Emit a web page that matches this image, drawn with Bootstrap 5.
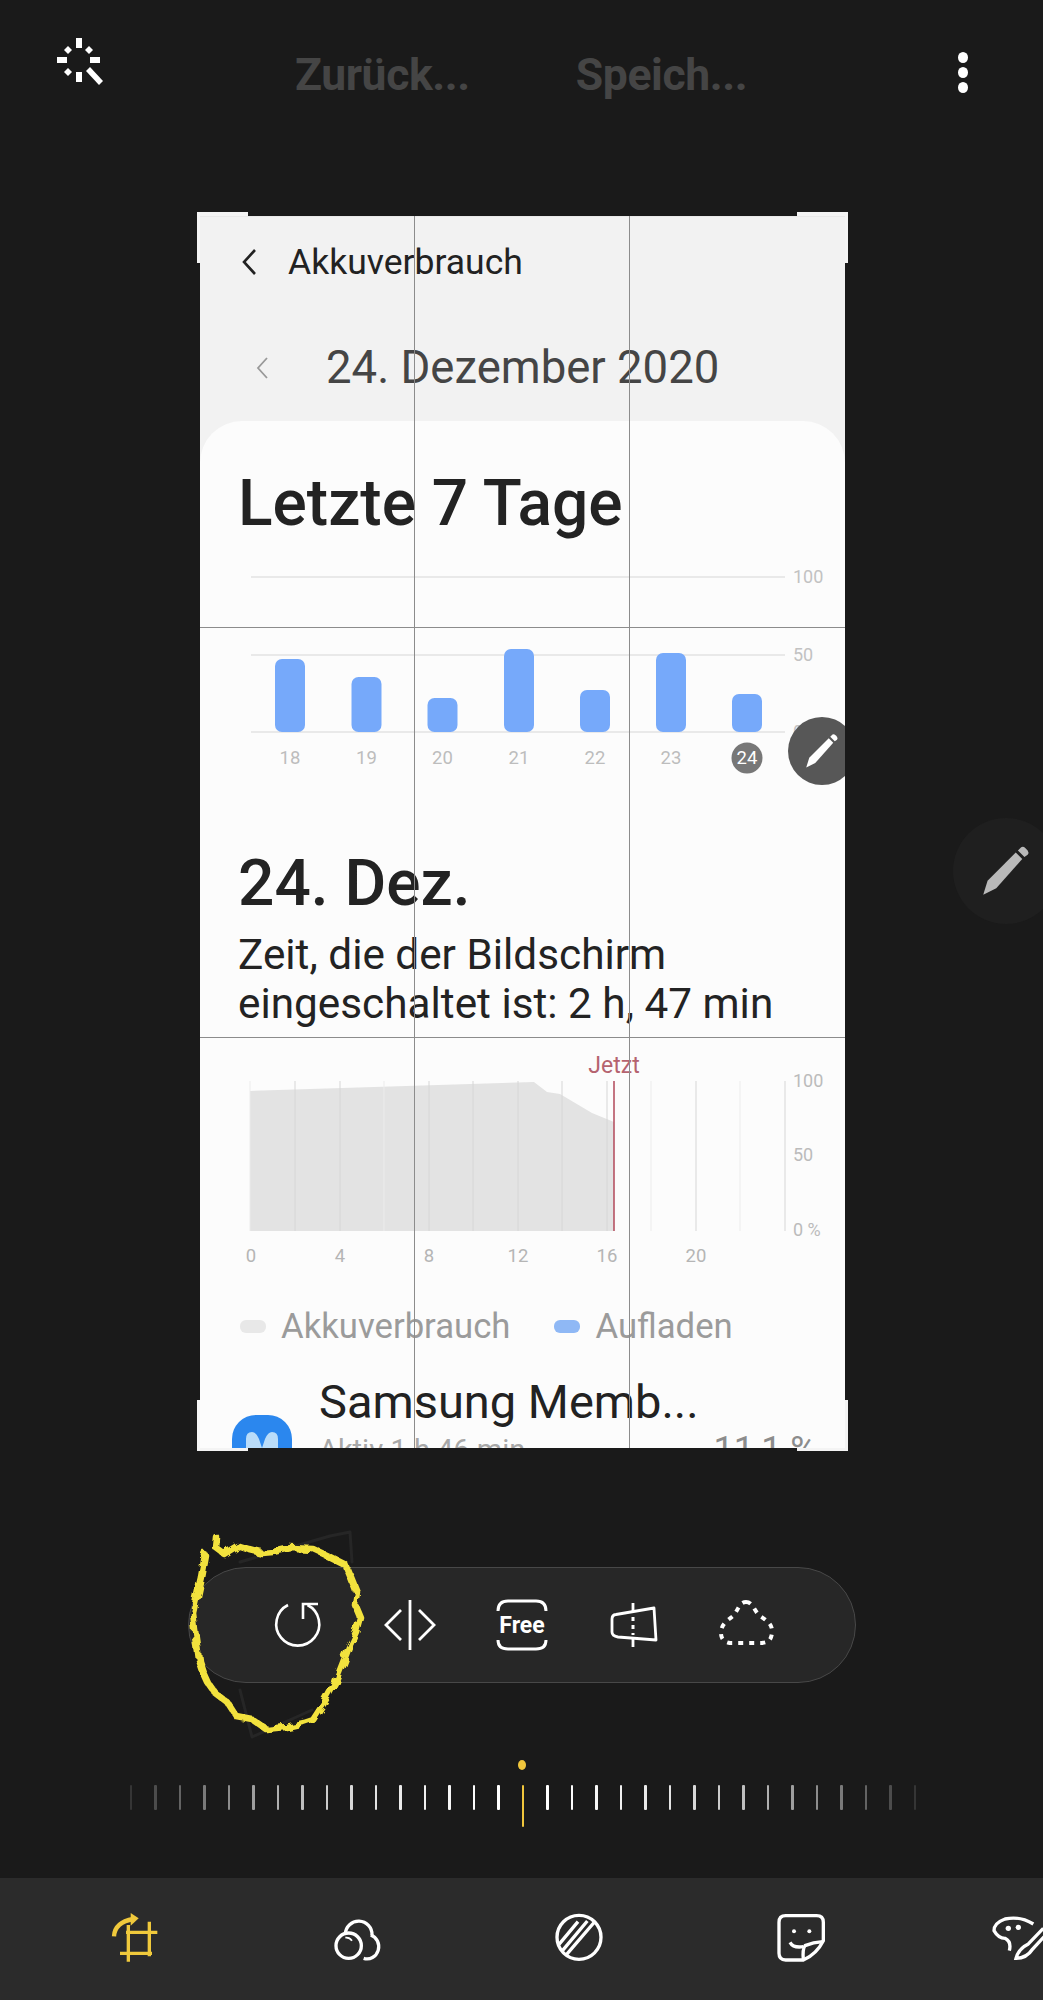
<!DOCTYPE html>
<html lang="de">

<head>
  <meta charset="UTF-8">
  <meta name="viewport" content="width=device-width, initial-scale=1.0">
  <title>Bild bearbeiten</title>
  <link href="https://cdn.jsdelivr.net/npm/bootstrap@5.3.0/dist/css/bootstrap.min.css" rel="stylesheet">
  <style>
    body { background: #1a1a1a; font-family: Roboto, "Liberation Sans", sans-serif; }
    svg { display: block; flex-shrink: 0; }
    svg text { font-family: Roboto, "Liberation Sans", sans-serif; }

    .editor { width: 1043px; height: 2000px; overflow: hidden; }

    /* top bar */
    .topbar { height: 216px; flex-shrink: 0; }
    .magic-btn { margin: 31px 0 0 55px; }
    .top-action { margin-top: 51px; font-size: 44.5px; line-height: 48px; font-weight: 700; color: #454545; letter-spacing: -.4px; }
    .action-back { margin-left: 190px; }
    .action-save { margin-left: 106px; }
    .more-btn { margin: 52px 0 0 auto; padding-right: 75px; }
    .more-btn i { display: block; width: 10px; height: 11px; margin-bottom: 4px; border-radius: 50%; background: #fff; }

    /* picture being cropped */
    .shot-wrap { width: 645px; height: 1232px; margin-left: 200px; flex-shrink: 0; }
    .shot { height: 100%; overflow: hidden; background: #f2f2f2; border-top: 1px solid #e9e9e9; }
    .shot-head { height: 204px; padding: 21px 0 0 40px; background: #f2f2f2; flex-shrink: 0; }
    .shot-title { font-size: 35.5px; line-height: 48px; color: #222; gap: 30px; }
    .shot-date { margin-top: 50px; font-size: 45.5px; line-height: 64px; color: #454545; padding-left: 16px; gap: 58px; }
    .usage-card { background: #fcfcfc; border-radius: 42px 42px 0 0; flex: 1 0 auto; }
    .big-head { font-size: 64px; line-height: 70px; font-weight: 500; color: #232323; padding-left: 38px; margin: 0; }
    .week-head { padding-top: 48px; }
    .screen-time { font-size: 42.3px; line-height: 49px; color: #232323; padding-left: 38px; margin: 11px 0 0; white-space: nowrap; }
    .legend-row { margin-top: 15px; padding-left: 40px; font-size: 34.7px; line-height: 48px; color: #9b9b9b; }
    .legend-swatch { width: 26px; height: 13px; border-radius: 6px; margin-right: 15px; }
    .swatch-use { background: #e8e8e8; }
    .swatch-charge { background: #8fb8f5; margin-left: 44px; margin-right: 15px; }
    .app-row { margin-top: 24px; padding-left: 32px; gap: 27px; }
    .app-icon { width: 60px; height: 60px; margin-top: 41px; border-radius: 24px; background: #2b87ee; overflow: hidden; }
    .app-name { font-size: 47px; line-height: 56px; color: #222; white-space: nowrap; }
    .app-active { font-size: 29px; line-height: 40px; color: #a8a8a8; white-space: nowrap; }
    .app-share { font-size: 36px; line-height: 40px; color: #8c8c8c; margin: 56px 0 0 -12px; white-space: nowrap; }

    /* crop overlay */
    .crop-line { position: absolute; background: #8c8c8c; }
    .crop-v { top: 0; bottom: 0; width: 1px; }
    .crop-h { left: 0; right: 0; height: 1px; }
    .crop-corner { position: absolute; width: 51px; height: 51px; border: 0 solid #f4f4f4; }
    .corner-tl { top: -4px; left: -3px; border-width: 4px 0 0 3px; }
    .corner-tr { top: -4px; right: -3px; border-width: 4px 3px 0 0; }
    .corner-bl { bottom: -3px; left: -3px; border-width: 0 0 3px 3px; }
    .corner-br { bottom: -3px; right: -3px; border-width: 0 3px 3px 0; }
    .pen-inner { position: absolute; left: 588px; top: 501px; width: 68px; height: 68px; border-radius: 50%; background: #575757; }
    .pen-outer { position: absolute; left: 953px; top: 818px; width: 106px; height: 106px; border-radius: 50%; background: #1f1f1f; }

    /* tools */
    .tool-pill { width: 668px; height: 116px; margin: 119px auto 0; border: 1px solid #484848; border-radius: 58px; background: #272727; flex-shrink: 0; }
    .tool-slot { width: 112px; }
    .ruler-dot { width: 8px; height: 10px; margin: 77px auto 0; border-radius: 50%; background: #f0c63c; flex-shrink: 0; }
    .ruler-row { margin-top: 15px; padding-left: 3px; gap: 22px; height: 42px; flex-shrink: 0; }
    .ruler-tick { width: 2.5px; height: 25px; background: #fff; border-radius: 1px; }
    .ruler-now { height: 42px; background: #f0c63c; }
    .bottom-bar { height: 122px; margin-top: 51px; padding-left: 24px; background: #2b2b2b; }
    .bottom-slot { flex: 0 0 222px; }
    .scribble { position: absolute; top: 0; left: 0; pointer-events: none; }
  </style>
</head>

<body class="m-0">
  <svg width="0" height="0" class="position-absolute">
    <symbol id="pen" viewBox="0 0 48 48">
      <path d="M3 46 L7 33 L33 7 L39 13 L15 40 Z" />
      <path d="M35 5 L38 2 Q40 1 42 3 L44 5 Q45.5 7 44 9 L41 11 Z" />
    </symbol>
    <filter id="shaky" x="-10%" y="-10%" width="120%" height="120%">
      <feTurbulence type="fractalNoise" baseFrequency="0.09" numOctaves="2" seed="4" />
      <feDisplacementMap in="SourceGraphic" scale="9" />
    </filter>
  </svg>

  <div class="editor position-relative d-flex flex-column">
    <header class="topbar d-flex align-items-start">
      <svg class="magic-btn" width="50" height="56" viewBox="55 30 50 56" fill="#fff" stroke="none">
        <rect x="76" y="37" width="6" height="10" />
        <rect x="76" y="71" width="6" height="10" />
        <rect x="57" y="56" width="10" height="6" />
        <rect x="90" y="56" width="10" height="6" />
        <path d="M68 45 L72 49 L68 53 L64 49 Z M89 45 L93 49 L89 53 L85 49 Z M68 67 L72 71 L68 75 L64 71 Z" />
        <path d="M90 66 L103 80 L99 84 L86 70 Z" />
      </svg>
      <div class="top-action action-back">Zurück...</div>
      <div class="top-action action-save">Speich...</div>
      <div class="more-btn"><i></i><i></i><i></i></div>
    </header>

    <div class="shot-wrap position-relative">
      <div class="shot d-flex flex-column">
        <div class="shot-head">
          <div class="shot-title d-flex align-items-center">
            <svg width="18" height="26" viewBox="0 0 18 26" fill="none" stroke="#222" stroke-width="2.6"><path d="M15 1 L4 13 L15 25" /></svg>
            <span>Akkuverbrauch</span>
          </div>
          <div class="shot-date d-flex align-items-center">
            <svg width="12" height="22" viewBox="0 0 12 22" fill="none" stroke="#999" stroke-width="1.8"><path d="M11 1 L2 11 L11 21" /></svg>
            <span>24. Dezember 2020</span>
          </div>
        </div>

        <div class="usage-card">
          <h2 class="big-head week-head">Letzte 7 Tage</h2>
          <svg width="645" height="310" viewBox="199 539 645 310">
            <g stroke="#e9e9e9" stroke-width="2">
              <path d="M250 577 H784 M250 655 H784 M250 732 H784" />
            </g>
            <g fill="#76a9fa">
              <rect x="274" y="659" width="30" height="73" rx="7" />
              <rect x="350.500" y="677" width="30" height="55" rx="7" />
              <rect x="426.500" y="698" width="30" height="34" rx="7" />
              <rect x="503" y="649" width="30" height="83" rx="7" />
              <rect x="579" y="690" width="30" height="42" rx="7" />
              <rect x="655" y="653" width="30" height="79" rx="7" />
              <rect x="731" y="694" width="30" height="38" rx="7" />
            </g>
            <g fill="#c2c2c2" font-size="18">
              <text x="792" y="583">100</text>
              <text x="792" y="661">50</text>
              <text x="792" y="738">0 %</text>
            </g>
            <g fill="#bdbdbd" font-size="18.500" text-anchor="middle">
              <text x="289" y="764">18</text>
              <text x="365.500" y="764">19</text>
              <text x="441.500" y="764">20</text>
              <text x="518" y="764">21</text>
              <text x="594" y="764">22</text>
              <text x="670" y="764">23</text>
            </g>
            <circle cx="746" cy="758" r="15.500" fill="#777" />
            <text x="746" y="764" fill="#fff" font-size="18.500" text-anchor="middle">24</text>
          </svg>

          <h2 class="big-head">24. Dez.</h2>
          <p class="screen-time">Zeit, die der Bildschirm<br>eingeschaltet ist: 2 h, 47 min</p>

          <svg width="645" height="259" viewBox="199 1029 645 259">
            <path d="M249 1092 L533 1083 L546 1093 L559 1095 L591 1114 L613 1123 V1232 H249 Z" fill="#e3e3e3" />
            <path d="M294 1082 V1232 M339 1082 V1232 M428 1082 V1232 M472 1082 V1232 M517 1082 V1232 M561 1082 V1232 M606 1082 V1232 M695 1082 V1232 M784 1082 V1232" stroke="#d6d6d6" />
            <path d="M249 1082 V1232 M383 1082 V1232 M650 1082 V1232 M739 1082 V1232" stroke="#ececec" />
            <path d="M613 1082 V1232" stroke="#b2485a" stroke-width="1.500" />
            <text x="613" y="1074" fill="#b5636f" font-size="23" text-anchor="middle">Jetzt</text>
            <g fill="#bbb" font-size="18">
              <text x="792" y="1088">100</text>
              <text x="792" y="1162">50</text>
              <text x="792" y="1237">0 %</text>
            </g>
            <g fill="#b5b5b5" font-size="18.500" text-anchor="middle">
              <text x="250" y="1263">0</text>
              <text x="339" y="1263">4</text>
              <text x="428" y="1263">8</text>
              <text x="517" y="1263">12</text>
              <text x="606" y="1263">16</text>
              <text x="695" y="1263">20</text>
            </g>
          </svg>

          <div class="legend-row d-flex align-items-center">
            <span class="legend-swatch swatch-use"></span><span>Akkuverbrauch</span>
            <span class="legend-swatch swatch-charge"></span><span>Aufladen</span>
          </div>

          <div class="app-row d-flex">
            <div class="app-icon flex-shrink-0">
              <svg width="60" height="60" viewBox="0 0 60 60"><path d="M14 44 V24 Q14 17 20 17 Q24 17 27 24 L30 33 L33 24 Q36 17 40 17 Q46 17 46 24 V44 Z" fill="#b9dcf9" /></svg>
            </div>
            <div class="app-text flex-shrink-0">
              <div class="app-name">Samsung Memb...</div>
              <div class="app-active">Aktiv 1 h 46 min</div>
            </div>
            <div class="app-share">11,1 %</div>
          </div>
        </div>
      </div>

      <div class="crop-line crop-v" style="left: 214px"></div>
      <div class="crop-line crop-v" style="left: 429px"></div>
      <div class="crop-line crop-h" style="top: 411px"></div>
      <div class="crop-line crop-h" style="top: 821px"></div>
      <div class="crop-corner corner-tl"></div>
      <div class="crop-corner corner-tr"></div>
      <div class="crop-corner corner-bl"></div>
      <div class="crop-corner corner-br"></div>
      <div class="position-absolute top-0 start-0 w-100 h-100 overflow-hidden">
        <div class="pen-inner d-flex align-items-center justify-content-center">
          <svg width="36" height="36" fill="#fff"><use href="#pen" /></svg>
        </div>
      </div>
    </div>

    <div class="pen-outer d-flex align-items-center justify-content-center">
      <svg width="52" height="52" fill="#b9b9b9"><use href="#pen" /></svg>
    </div>

    <div class="tool-pill d-flex align-items-center justify-content-center">
      <div class="tool-slot d-flex justify-content-center">
        <svg width="60" height="60" viewBox="0 0 60 60" fill="none" stroke="#fff" stroke-width="2.600">
          <path d="M20 10 A21.500 21.500 0 1 0 39.500 10" />
          <path d="M35 24 V9 H50" />
        </svg>
      </div>
      <div class="tool-slot d-flex justify-content-center">
        <svg width="60" height="60" viewBox="0 0 60 60" fill="none" stroke="#fff" stroke-width="2.800">
          <path d="M21 15 L6 30 L21 45 M39 15 L54 30 L39 45" />
          <path d="M30 5 V55" />
        </svg>
      </div>
      <div class="tool-slot d-flex justify-content-center">
        <svg width="60" height="60" viewBox="0 0 60 60" fill="none" stroke="#fff" stroke-width="3">
          <path d="M6 16 Q6 6 16 6 H44 Q54 6 54 16 M6 45 Q6 54 16 54 H44 Q54 54 54 45" />
          <text x="30" y="38" fill="#fff" stroke="none" font-size="23" font-weight="700" text-anchor="middle">Free</text>
        </svg>
      </div>
      <div class="tool-slot d-flex justify-content-center">
        <svg width="60" height="60" viewBox="0 0 60 60" fill="none" stroke="#fff" stroke-width="2.800" stroke-linejoin="round">
          <path d="M8 24 Q8 20 12 19.500 L50 13 L52 45 L14 42 Q8 41 8 37 Z" />
          <path d="M29 8 V17 M29 43 V52" />
          <path d="M29 22 V40" stroke-dasharray="4 4" stroke-width="3" />
        </svg>
      </div>
      <div class="tool-slot d-flex justify-content-center">
        <svg width="60" height="60" viewBox="0 0 60 60" fill="none" stroke="#fff" stroke-width="4" stroke-dasharray="5 6">
          <path d="M30 7 C37 7 38 16 44 21 C50 25 57 29 56 38 C55 46 52 47 46 48 L14 48 C8 47 5 44 5 38 C5 29 12 25 17 21 C22 16 23 7 30 7 Z" />
        </svg>
      </div>
    </div>

    <div class="ruler-dot"></div>
    <div id="ruler" class="ruler-row d-flex justify-content-center align-items-start"></div>

    <div class="bottom-bar d-flex align-items-center flex-shrink-0">
      <div class="bottom-slot d-flex justify-content-center">
        <svg width="100" height="80" viewBox="-45 0 300 240" fill="none" stroke="#f0c93c" stroke-width="10" stroke-linecap="butt">
          <path d="M85 78 V188 M148 68 V172 M60 163 H156 M78 100 H172" />
          <path d="M42 112 Q44 70 100 60" stroke-width="13" />
          <path d="M92 42 L116 58 L92 80 Z" fill="#f0c93c" stroke="none" />
        </svg>
      </div>
      <div class="bottom-slot d-flex justify-content-center">
        <svg width="100" height="80" viewBox="615 0 300 240" fill="none" stroke="#fff" stroke-width="10">
          <circle cx="740" cy="140" r="38" />
          <path d="M730 105 A40 40 0 1 1 810 108" />
          <path d="M806 108 A34 36 0 0 1 785 178" />
          <path d="M730 116 Q742 114 750 125" stroke-width="5" />
        </svg>
      </div>
      <div class="bottom-slot d-flex justify-content-center">
        <svg width="100" height="80" viewBox="-37 0 300 240" fill="none" stroke="#fff" stroke-width="10">
          <circle cx="113" cy="115" r="66" />
          <path d="M76 166 L162 66 M53 136 L110 68 M64 154 L138 66" />
        </svg>
      </div>
      <div class="bottom-slot d-flex justify-content-center">
        <svg width="100" height="80" viewBox="628 0 300 240" fill="none" stroke="#fff" stroke-width="10">
          <path d="M845 125 V70 Q845 50 825 50 H732 Q712 50 712 70 V163 Q712 183 732 183 H785 Q825 165 845 125 Z" />
          <path d="M785 183 Q782 150 790 140 Q815 130 843 128" />
          <path d="M745 130 Q755 148 785 143" />
          <circle cx="757" cy="97" r="6" fill="#fff" stroke="none" />
          <circle cx="803" cy="97" r="6" fill="#fff" stroke="none" />
        </svg>
      </div>
      <div class="bottom-slot d-flex justify-content-center">
        <svg width="100" height="80" viewBox="1299 0 300 240" fill="none" stroke="#fff" stroke-width="10">
          <path d="M1480 75 Q1440 50 1395 60 Q1362 72 1362 95 Q1375 118 1395 118 Q1415 128 1408 155" />
          <path d="M1510 88 L1465 135 Q1435 150 1428 178 Q1460 178 1478 150 L1520 105" />
          <circle cx="1405" cy="88" r="8" fill="#fff" stroke="none" />
          <circle cx="1435" cy="85" r="8" fill="#fff" stroke="none" />
        </svg>
      </div>
    </div>

    <svg class="scribble" width="1043" height="2000" viewBox="0 0 1043 2000" fill="none" stroke-linejoin="round" stroke-linecap="round">
      <path d="M240 1562 L330 1536 L350 1532 L352 1562 M240 1690 L252 1737 L312 1710" stroke="#262626" stroke-width="3" />
      <path filter="url(#shaky)" stroke="#f2e23e" stroke-width="6.500" d="M217 1538 L216 1548 L224 1554 L237 1546 L250 1550 L262 1553 L273 1552 L291 1548 L313 1549 L328 1556 L346 1565 L351 1577 L357 1592 L355 1605 L360 1617 L356 1632 L349 1647 L342 1665 L335 1683 L324 1703 L313 1720 L304 1723 L286 1727 L266 1729 L253 1720 L237 1717 L228 1703 L215 1693 L208 1683 L203 1672 L199 1660 L195 1630 L193 1613 L197 1595 L201 1577 L205 1555" />
    </svg>
  </div>

  <script>
    // Skala: 33 Striche, zur Mitte hin heller
    const ruler = document.getElementById("ruler");
    for (let i = 0; i < 33; i++) {
      const tick = document.createElement("div");
      const dist = Math.abs(i - 16);
      tick.className = "ruler-tick" + (dist === 0 ? " ruler-now" : "");
      if (dist > 0) tick.style.opacity = Math.max(0.1, 1 - dist * dist / 290).toFixed(2);
      ruler.appendChild(tick);
    }
  </script>
  <script src="https://cdn.jsdelivr.net/npm/bootstrap@5.3.0/dist/js/bootstrap.bundle.min.js"></script>
</body>

</html>
